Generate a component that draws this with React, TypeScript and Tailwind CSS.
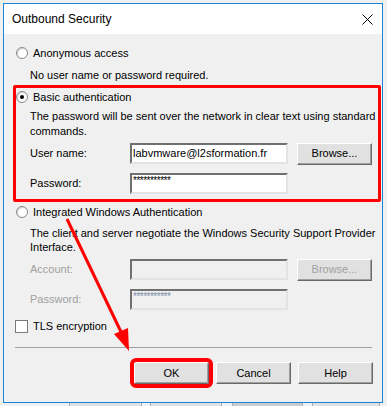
import React from 'react'

function Radio({ checked = false }: { checked?: boolean }) {
  return (
    <span className="w-[12px] h-[12px] shrink-0 rounded-full border border-[#8a8a8a] bg-white flex items-center justify-center shadow-[inset_1px_1px_1px_#cfcfcf]">
      {checked && <span className="w-[4px] h-[4px] rounded-full bg-black" />}
    </span>
  )
}

function Field({ value = '', disabled = false, secret = false }: { value?: string; disabled?: boolean; secret?: boolean }) {
  return (
    <div
      className={
        'w-[158px] h-[21px] border-2 border-t-[#707070] border-l-[#707070] border-r-[#e3e3e3] border-b-[#e3e3e3] flex pl-[1px] ' +
        (disabled ? 'bg-[#f0f0f0] text-[#7a8ea8]' : 'bg-white text-black') +
        (secret ? ' items-start text-[10px] leading-none pt-[1px] tracking-[-0.5px]' : ' items-center')
      }
    >
      {value}
    </div>
  )
}

function Button({ label, disabled = false, ring = false }: { label: string; disabled?: boolean; ring?: boolean }) {
  return (
    <div
      className={
        'w-[75px] h-[22px] shrink-0 bg-[#e1e1e1] border border-t-white border-l-white border-r-[#696969] border-b-[#696969] shadow-[inset_-1px_-1px_0_#a0a0a0] flex items-center justify-center ' +
        (disabled ? 'text-[#a0a0a0]' : 'text-black') +
        (ring ? ' outline-[4px] outline-solid outline-[#ff0000] rounded-[2px]' : '')
      }
    >
      {label}
    </div>
  )
}

export default function App() {
  return (
    <div className="relative w-[387px] h-[406px] overflow-hidden bg-[#f0f0f0] font-['Liberation_Sans',Arial,sans-serif] text-[11px] text-black">
      <div className="pl-[3px] pt-[3px]">
        {/* dialog window */}
        <div className="w-[380px] h-[400px] border border-[#1883d7] bg-[#f0f0f0] flex flex-col">
          <div className="h-[30px] shrink-0 bg-white flex items-center justify-between pl-[8px] pr-[9px]">
            <span className="text-[12px]">Outbound Security</span>
            <svg width="11" height="11" viewBox="0 0 11 11" className="mt-[1px]">
              <path d="M0.5 0.5L10.5 10.5M10.5 0.5L0.5 10.5" stroke="#000" strokeWidth="1" />
            </svg>
          </div>

          <div className="flex flex-col">
            <div className="ml-[12px] mt-[11px] h-[16px] flex items-center gap-[5px]">
              <Radio />
              <span>Anonymous access</span>
            </div>
            <div className="ml-[26px] mt-[6px] h-[16px] flex items-center">No user name or password required.</div>

            {/* highlighted group */}
            <div className="ml-[9px] mr-[1px] mt-[2px] border-[3px] border-[#ff0000] rounded-[2px] pt-[1px] pb-[5px] flex flex-col">
              <div className="h-[16px] flex items-center gap-[5px]">
                <Radio checked />
                <span>Basic authentication</span>
              </div>
              <div className="ml-[14px] mt-[4px] leading-[15px] whitespace-nowrap">
                The password will be sent over the network in clear text using standard
                <br />
                commands.
              </div>
              <div className="ml-[14px] mt-[4px] h-[21px] flex items-center">
                <span className="w-[100px]">User name:</span>
                <Field value="labvmware@l2sformation.fr" />
                <div className="ml-[9px]">
                  <Button label="Browse..." />
                </div>
              </div>
              <div className="ml-[14px] mt-[9px] h-[21px] flex items-center">
                <span className="w-[100px]">Password:</span>
                <Field value="***********" secret />
              </div>
            </div>

            <div className="ml-[12px] mt-[2px] h-[16px] flex items-center gap-[5px]">
              <Radio />
              <span>Integrated Windows Authentication</span>
            </div>
            <div className="ml-[26px] mt-[6px] leading-[14px] whitespace-nowrap">
              The client and server negotiate the Windows Security Support Provider
              <br />
              Interface.
            </div>
            <div className="ml-[26px] mt-[5px] h-[21px] flex items-center text-[#a0a0a0]">
              <span className="w-[100px]">Account:</span>
              <Field disabled />
              <div className="ml-[9px]">
                <Button label="Browse..." disabled />
              </div>
            </div>
            <div className="ml-[26px] mt-[9px] h-[21px] flex items-center text-[#a0a0a0]">
              <span className="w-[100px]">Password:</span>
              <Field value="***********" disabled secret />
            </div>

            <div className="ml-[11px] mt-[8px] h-[16px] flex items-center gap-[5px]">
              <span className="w-[13px] h-[13px] border border-[#7a7a7a] bg-white" />
              <span>TLS encryption</span>
            </div>

            <div className="ml-[11px] mt-[13px] w-[357px] h-px bg-[#a0a0a0]" />

            <div className="mt-[14px] pr-[9px] flex justify-end gap-[7px]">
              <Button label="OK" ring />
              <Button label="Cancel" />
              <Button label="Help" />
            </div>
          </div>
        </div>

        {/* parent window peeking below */}
        <div className="h-[3px] flex">
          <div className="w-[66px]" />
          <div className="w-[73px] bg-[#e1e1e1] border-x border-[#adadad]" />
          <div className="w-[8px]" />
          <div className="w-[72px] bg-[#e1e1e1] border-x border-[#adadad]" />
          <div className="w-[10px]" />
          <div className="w-[71px] bg-[#cccccc] border-x border-[#adadad]" />
          <div className="w-[9px]" />
          <div className="w-[68px] bg-[#e1e1e1] border-x border-[#adadad]" />
        </div>
      </div>

      {/* annotation arrow */}
      <svg className="absolute inset-0 pointer-events-none" width="387" height="406" viewBox="0 0 387 406">
        <line x1="67" y1="219" x2="122" y2="334" stroke="#ff0000" strokeWidth="3" />
        <polygon points="129,351 114,334 128,328" fill="#ff0000" />
      </svg>
    </div>
  )
}
